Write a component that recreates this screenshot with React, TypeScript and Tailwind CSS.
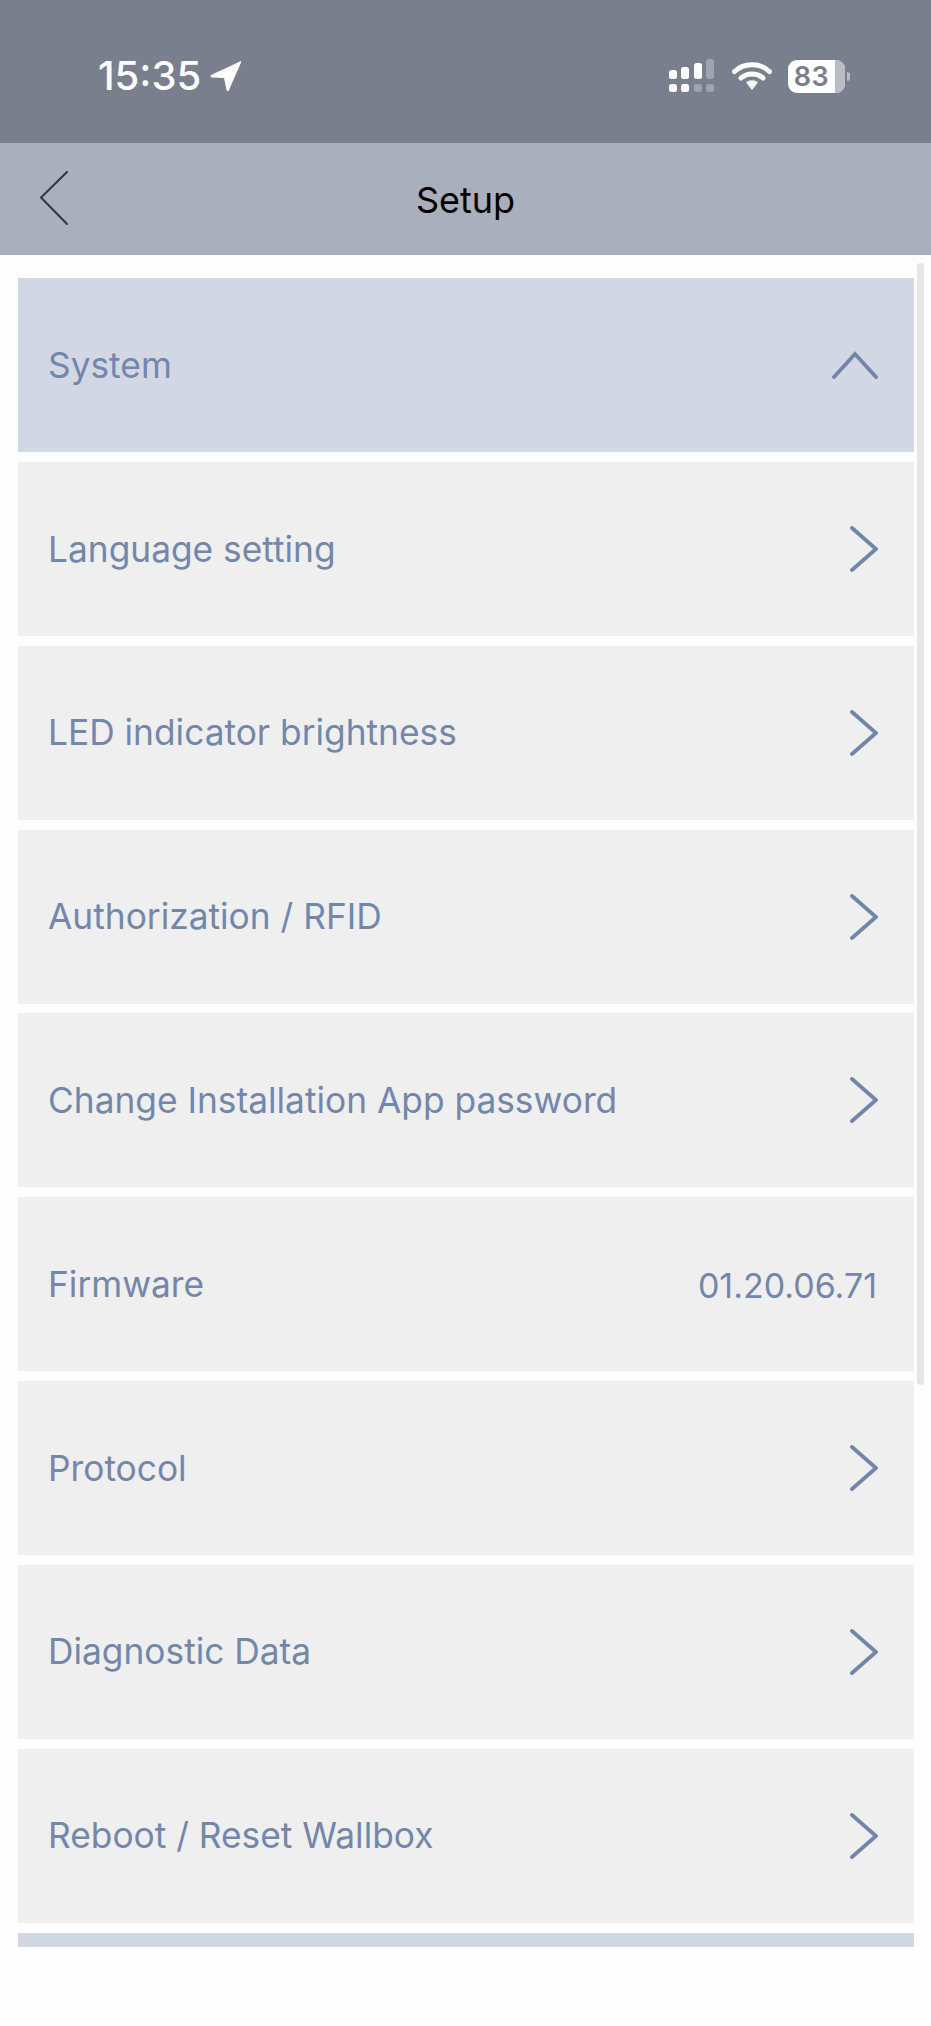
import * as React from 'react';

type Row = {
  label: string;
  value?: string;
};

const rows: Row[] = [
  { label: 'Language setting' },
  { label: 'LED indicator brightness' },
  { label: 'Authorization / RFID' },
  { label: 'Change Installation App password' },
  { label: 'Firmware', value: '01.20.06.71' },
  { label: 'Protocol' },
  { label: 'Diagnostic Data' },
  { label: 'Reboot / Reset Wallbox' },
];

const ChevronRight = () => (
  <svg width="28" height="46" viewBox="0 0 28 46" fill="none" className="shrink-0">
    <path d="M2 2 L26 23 L2 44" stroke="#6f85aa" strokeWidth="3.8" strokeLinecap="round" strokeLinejoin="miter" />
  </svg>
);

const SignalIcon = () => (
  <svg width="46" height="34" viewBox="0 0 46 34">
    <rect x="0" y="11" width="8" height="9" rx="2.5" fill="#fff" />
    <rect x="12" y="8" width="8" height="12" rx="2.5" fill="#fff" />
    <rect x="25" y="4" width="8" height="16" rx="2.5" fill="#fff" />
    <rect x="37" y="0" width="8" height="20" rx="2.5" fill="#a0a4af" />
    <rect x="0" y="25" width="8" height="8" rx="2.5" fill="#fff" />
    <rect x="12" y="25" width="8" height="8" rx="2.5" fill="#fff" />
    <rect x="25" y="25" width="8" height="8" rx="2.5" fill="#a0a4af" />
    <rect x="37" y="25" width="8" height="8" rx="2.5" fill="#a0a4af" />
  </svg>
);

const WifiIcon = () => (
  <svg width="40" height="30" viewBox="0 0 40 30" fill="none">
    <path d="M2.5 10.5 C12 1.5 28 1.5 37.5 10.5" stroke="#fff" strokeWidth="5" strokeLinecap="round" />
    <path d="M9 17 C15 11.5 25 11.5 31 17" stroke="#fff" strokeWidth="5" strokeLinecap="round" />
    <path d="M14 21.5 C17.5 18.5 22.5 18.5 26 21.5 L20 29 Z" fill="#fff" />
  </svg>
);

const Battery = () => (
  <div className="flex items-center gap-[2px]">
    <div className="relative flex h-[33px] w-[57px] items-center overflow-hidden rounded-[9px] bg-white">
      <div className="absolute inset-y-0 right-0 w-[10px] bg-[#b9bcc6]" />
      <span className="relative w-[47px] text-center text-[27px] leading-none font-semibold tracking-[0.5px] text-[#7a7f8d]">83</span>
    </div>
    <div className="h-[9px] w-[3px] rounded-r-full bg-[#b9bcc6]" />
  </div>
);

const App = () => {
  return (
    <div className="relative flex h-[2026px] w-[931px] flex-col overflow-hidden bg-[#fdfdfd] font-['Inter',sans-serif]">
      <div className="flex h-[143px] shrink-0 items-start justify-between bg-[#7a7f8d] pt-[59px] pr-[81px] pl-[98px]">
        <div className="flex items-center gap-[9px]">
          <span className="text-[40px] leading-[34px] font-medium text-white">15:35</span>
          <svg width="32" height="32" viewBox="0 0 32 32">
            <path d="M1 15 L30 1.5 C31 1 31.5 1.5 31 2.5 L19 30 C18.5 31.5 17 31.5 16.5 30 L14 18 L2 17.5 C0.5 17.5 0 15.8 1 15 Z" fill="#fff" />
          </svg>
        </div>
        <div className="flex items-center">
          <SignalIcon />
          <div className="ml-[17px] mr-[16px]">
            <WifiIcon />
          </div>
          <Battery />
        </div>
      </div>

      <div className="relative flex h-[112px] shrink-0 items-center justify-center bg-[#a9afbc] pt-[2px]">
        <svg width="30" height="56" viewBox="0 0 30 56" fill="none" className="absolute top-[27px] left-[39px]">
          <path d="M28 2 L2 27.5 L28 54" stroke="#33363d" strokeWidth="2" strokeLinecap="round" />
        </svg>
        <span className="text-[36px] leading-none font-normal text-black">Setup</span>
      </div>

      <div className="flex flex-col pt-[23px] pr-[17px] pl-[18px]">
        <div className="flex h-[174px] items-center justify-between bg-[#d2d7e3] pr-[36px] pl-[30px]">
          <span className="pt-[2px] text-[35.3px] font-normal text-[#7287ab]">System</span>
          <svg width="46" height="28" viewBox="0 0 46 28" fill="none">
            <path d="M2 26 L23 3 L44 26" stroke="#6f85aa" strokeWidth="3.8" strokeLinecap="round" />
          </svg>
        </div>
        <div className="mt-[10px] flex flex-col gap-[9.8px]">
          {rows.map((row) => (
            <div key={row.label} className="flex h-[174px] items-center justify-between bg-[#efefef] pr-[36px] pl-[30px]">
              <span className="pt-[2px] text-[35.3px] font-normal text-[#7287ab]">{row.label}</span>
              {row.value ? <span className="mr-px pt-[2px] text-[34px] font-normal text-[#7287ab]">{row.value}</span> : <ChevronRight />}
            </div>
          ))}
        </div>
        <div className="mt-[10px] h-[14px] bg-[#d2d7e3]" />
      </div>

      <div className="absolute top-[263px] left-[917px] h-[1122px] w-[7px] rounded-full bg-[#e6e6e6]" />
    </div>
  );
};

export default App;
